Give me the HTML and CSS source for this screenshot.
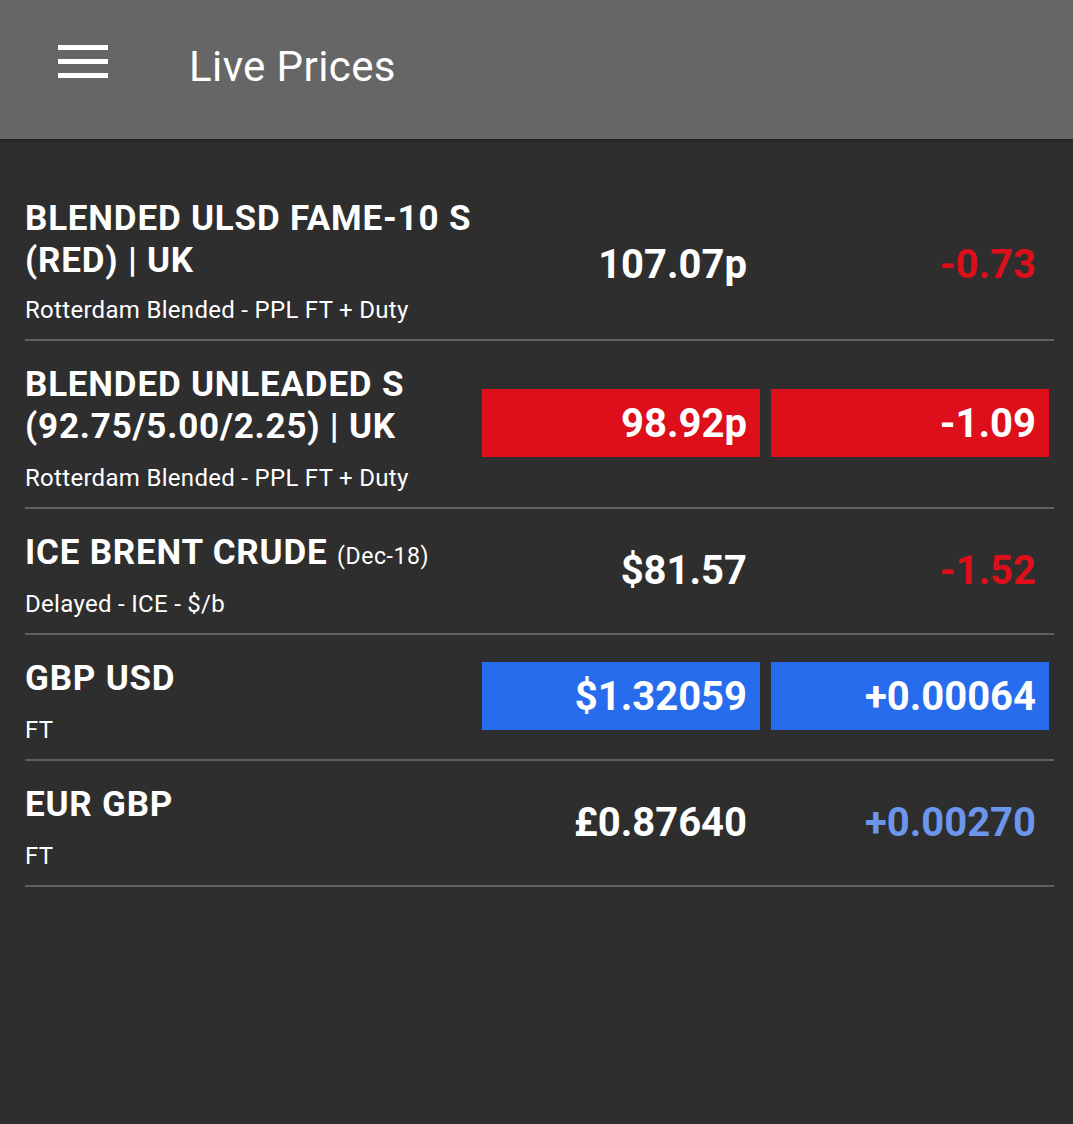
FILE: index.html
```html
<!DOCTYPE html>
<html lang="en">
<head>
  <meta charset="UTF-8" />
  <meta name="viewport" content="width=device-width, initial-scale=1" />
  <title>Live Prices</title>
  <link rel="stylesheet" href="styles.css">
</head>
<body>
  <header class="appbar">
    <button class="menu" aria-label="Menu">
      <span></span><span></span><span></span>
    </button>
    <h1>Live Prices</h1>
  </header>

  <main class="prices">
    <div class="row lead">
      <div class="name">
        <div class="title">BLENDED ULSD FAME-10 S (RED) | UK</div>
        <div class="sub">Rotterdam Blended - PPL FT + Duty</div>
      </div>
      <div class="val">107.07p</div>
      <div class="val chg down">-0.73</div>
    </div>

    <div class="row">
      <div class="name">
        <div class="title">BLENDED UNLEADED S (92.75/5.00/2.25) | UK</div>
        <div class="sub">Rotterdam Blended - PPL FT + Duty</div>
      </div>
      <div class="val flash-down">98.92p</div>
      <div class="val chg flash-down">-1.09</div>
    </div>

    <div class="row">
      <div class="name">
        <div class="title">ICE BRENT CRUDE <small>(Dec-18)</small></div>
        <div class="sub">Delayed - ICE - $/b</div>
      </div>
      <div class="val">$81.57</div>
      <div class="val chg down">-1.52</div>
    </div>

    <div class="row">
      <div class="name">
        <div class="title">GBP USD</div>
        <div class="sub">FT</div>
      </div>
      <div class="val flash-up">$1.32059</div>
      <div class="val chg flash-up">+0.00064</div>
    </div>

    <div class="row">
      <div class="name">
        <div class="title">EUR GBP</div>
        <div class="sub">FT</div>
      </div>
      <div class="val">£0.87640</div>
      <div class="val chg up">+0.00270</div>
    </div>
  </main>
</body>
</html>
```

FILE: styles.css
```css
* {
  box-sizing: border-box;
  margin: 0;
  padding: 0;
}
body {
  font-family: Roboto, "Noto Sans", Arial, sans-serif;
  background: #2e2e2e;
  color: #fff;
  height: 100vh;
  overflow: hidden;
}
.appbar {
  height: 139px;
  background: #666;
  display: flex;
  align-items: center;
  box-shadow: 0 2px 4px rgba(0, 0, 0, 0.3);
}
.menu {
  margin-left: 58px;
  margin-top: -17px;
  width: 50px;
  height: 33px;
  background: none;
  border: none;
  display: flex;
  flex-direction: column;
  justify-content: space-between;
}
.menu span {
  display: block;
  height: 5px;
  background: #fff;
}
.appbar h1 {
  margin-left: 81px;
  margin-bottom: 6px;
  font-size: 42px;
  font-weight: 400;
  letter-spacing: 0.4px;
  color: #fff;
}
.prices {
  padding-top: 31px;
}
.row {
  margin: 0 19px 0 25px;
  padding: 23px 5px 14px 0;
  border-bottom: 2px solid #5f5f5f;
  display: grid;
  grid-template-columns: 1fr 278px 289px;
  align-items: center;
}
.row.lead {
  padding-top: 28px;
}
.title {
  font-size: 35px;
  line-height: 42px;
  font-weight: 700;
  letter-spacing: 0.8px;
}
.title small {
  font-size: 23px;
  line-height: 1;
  font-weight: 400;
  letter-spacing: 0.6px;
}
.sub {
  margin-top: 15px;
  font-size: 24px;
  line-height: 30px;
  letter-spacing: 0.3px;
}
.lead .sub {
  margin-top: 13px;
}
.val {
  height: 68px;
  margin-bottom: 11px;
  padding-right: 13px;
  display: flex;
  align-items: center;
  justify-content: flex-end;
  font-size: 40px;
  font-weight: 700;
}
.val.chg {
  margin-left: 11px;
}
.lead .val {
  margin-top: 6px;
  margin-bottom: 0;
}
.down {
  color: #dc0f1a;
}
.up {
  color: #6b96ec;
}
.flash-down {
  background: #dc0f1a;
}
.flash-up {
  background: #276cec;
}
```
